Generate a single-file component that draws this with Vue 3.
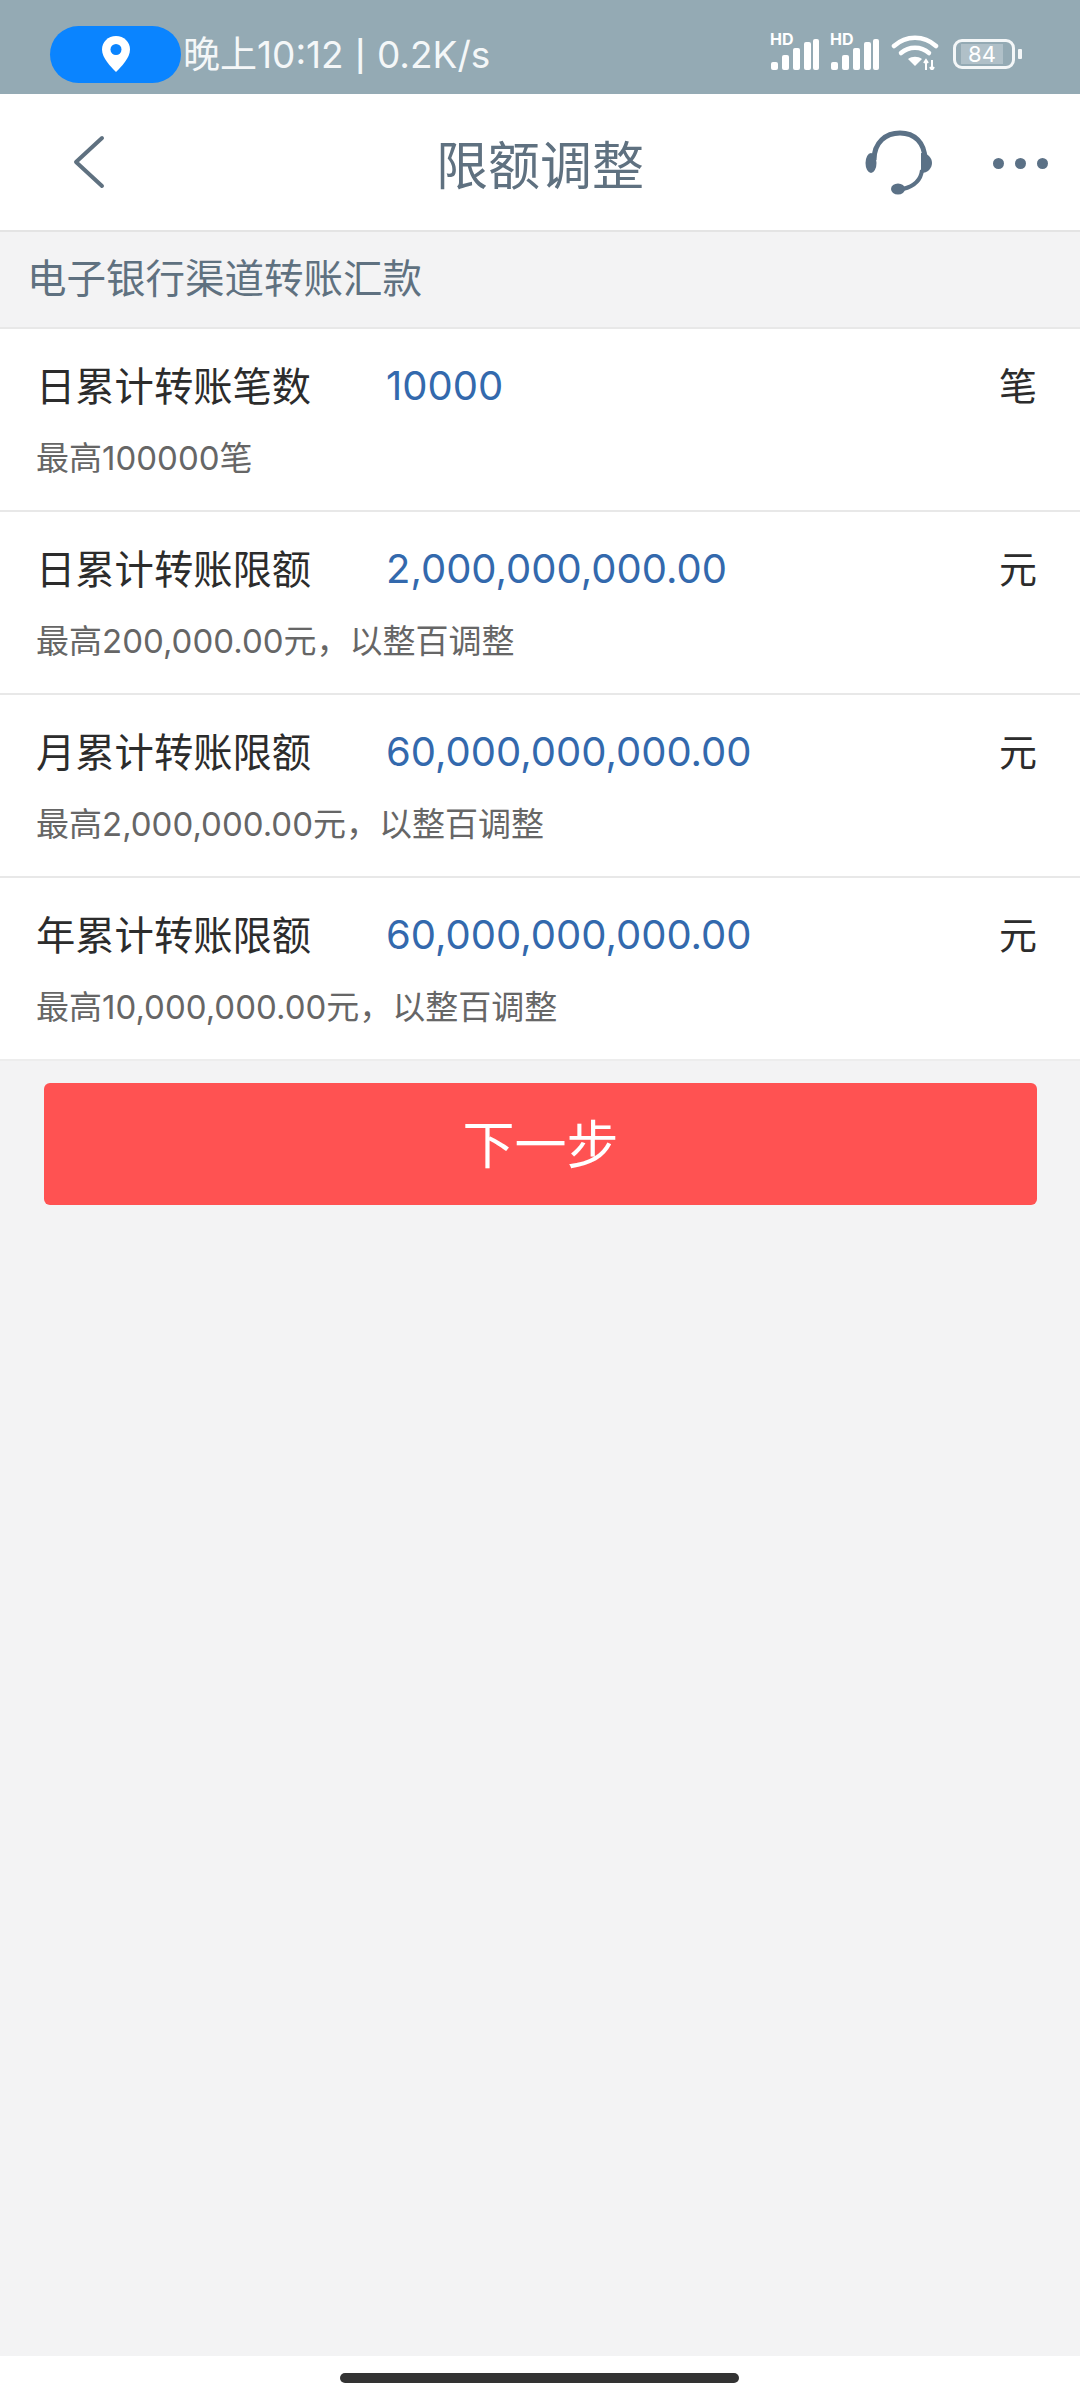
<template>
  <div class="page">
    <div class="status-bar">
      <div class="loc-pill">
        <svg width="30" height="38" viewBox="0 0 30 38">
          <path d="M15 1C7 1 1 7 1 14.500C1 23 10 32 15 37C20 32 29 23 29 14.500C29 7 23 1 15 1Z" fill="#fff" />
          <circle cx="15" cy="14.500" r="5.500" fill="#0a84ff" />
        </svg>
      </div>
      <span class="status-text">晚上10:12 <span class="sep">|</span> 0.2K/s</span>
      <div class="status-icons">
        <div v-for="n in 2" :key="n" class="signal">
          <span class="hd">HD</span>
          <svg width="50" height="32" viewBox="0 0 50 32">
            <rect x="1" y="24" width="7" height="8" rx="2" fill="#fff" />
            <rect x="12" y="17" width="7" height="15" rx="2" fill="#fff" />
            <rect x="23" y="10" width="7" height="22" rx="2" fill="#fff" />
            <rect x="34" y="4" width="7" height="28" rx="2" fill="#fff" />
            <rect x="43" y="1" width="6" height="31" rx="2" fill="#fff" />
          </svg>
        </div>
        <svg class="wifi" width="48" height="36" viewBox="0 0 48 36">
          <path d="M3 12C15 1 33 1 45 12" fill="none" stroke="#fff" stroke-width="4.500" stroke-linecap="round" />
          <path d="M10 19C18 12 30 12 38 19" fill="none" stroke="#fff" stroke-width="4.500" stroke-linecap="round" />
          <path d="M17 25C21 22 27 22 31 25L24 32Z" fill="#fff" />
          <path d="M35 36V27M33 29L35 26L37 29M41 26V35M39 33L41 36L43 33" fill="none" stroke="#fff" stroke-width="2" />
        </svg>
        <div class="battery">
          <div class="battery-body"><span class="battery-num">84</span></div>
          <div class="battery-cap"></div>
        </div>
      </div>
    </div>

    <div class="nav">
      <svg class="back" width="34" height="54" viewBox="0 0 34 54">
        <path d="M30 3L4 27L30 51" fill="none" stroke="#5f7180" stroke-width="4" stroke-linecap="round" stroke-linejoin="round" />
      </svg>
      <h1 class="title">限额调整</h1>
      <svg class="service" width="68" height="66" viewBox="0 0 68 66">
        <path d="M9 30C9 12 21 3 35 3C49 3 60 12 60 30" fill="none" stroke="#5b7186" stroke-width="5" />
        <path d="M57 40C56 50 50 56 38 59" fill="none" stroke="#5b7186" stroke-width="4" />
        <ellipse cx="6" cy="33" rx="5.500" ry="10" fill="#5b7186" />
        <path d="M56 23C63 23 67 28 67 33C67 38 63 43 56 43Z" fill="#5b7186" />
        <ellipse cx="33" cy="59" rx="7" ry="5.500" fill="#5b7186" />
      </svg>
      <div class="more">
        <span class="dot"></span><span class="dot"></span><span class="dot"></span>
      </div>
    </div>

    <div class="section-title">电子银行渠道转账汇款</div>

    <div class="list">
      <div v-for="item in items" :key="item.label" class="row">
        <div class="row-main">
          <span class="label">{{ item.label }}</span>
          <span class="value">{{ item.value }}</span>
          <span class="unit">{{ item.unit }}</span>
        </div>
        <div class="hint">{{ item.hint }}</div>
      </div>
    </div>

    <div class="btn-wrap">
      <button class="next-btn">下一步</button>
    </div>

    <div class="spacer"></div>

    <div class="home-area">
      <div class="home-bar"></div>
    </div>
  </div>
</template>

<script setup>
const items = [
  { label: '日累计转账笔数', value: '10000', unit: '笔', hint: '最高100000笔' },
  { label: '日累计转账限额', value: '2,000,000,000.00', unit: '元', hint: '最高200,000.00元，以整百调整' },
  { label: '月累计转账限额', value: '60,000,000,000.00', unit: '元', hint: '最高2,000,000.00元，以整百调整' },
  { label: '年累计转账限额', value: '60,000,000,000.00', unit: '元', hint: '最高10,000,000.00元，以整百调整' },
]
</script>

<style>
html, body { margin: 0; background: #f3f3f4; }
</style>

<style scoped>
.page {
  width: 1080px;
  height: 2400px;
  display: flex;
  flex-direction: column;
  background: #f3f3f4;
  font-family: Inter, "Noto Sans CJK SC", sans-serif;
}

.status-bar {
  height: 94px;
  flex: none;
  background: #94aab4;
  display: flex;
  align-items: center;
  padding-left: 50px;
  padding-right: 58px;
  box-sizing: border-box;
  color: #f4f7f8;
}
.loc-pill {
  width: 131px;
  height: 57px;
  margin-top: 14px;
  border-radius: 29px;
  background: #0a84ff;
  display: flex;
  align-items: center;
  justify-content: center;
}
.status-text { margin-left: 2px; margin-top: 14px; font-size: 37px; line-height: 80px; white-space: nowrap; }
.sep { font-family: Roboto, sans-serif; font-weight: 500; font-size: 42px; margin: 0 1px; }
.status-icons { margin-left: auto; display: flex; align-items: flex-end; gap: 10px; height: 40px; margin-top: 6px; }
.signal { position: relative; width: 50px; height: 32px; }
.signal svg { display: block; }
.hd {
  position: absolute;
  left: 0;
  top: -8px;
  font-size: 16px;
  line-height: 18px;
  font-weight: 700;
  color: #fff;
}
.wifi { margin-left: 1px; margin-right: 4px; }
.battery { display: flex; align-items: center; gap: 3px; height: 32px; }
.battery-body {
  width: 62px;
  height: 30px;
  box-sizing: border-box;
  border: 3px solid #f4f7f8;
  border-radius: 9px;
  display: flex;
  align-items: center;
  padding-left: 5px;
}
.battery-num {
  width: 42px;
  height: 20px;
  background: #b0c0c8;
  font-size: 22px;
  line-height: 20px;
  text-align: center;
  color: #fff;
}
.battery-cap { width: 4px; height: 10px; background: #f4f7f8; border-radius: 1px; }

.nav {
  height: 138px;
  flex: none;
  box-sizing: border-box;
  background: #fff;
  border-bottom: 2px solid #e4e4e4;
  display: flex;
  align-items: center;
  position: relative;
  padding-left: 72px;
  padding-right: 32px;
}
.back { display: block; margin-top: 0; }
.title {
  position: absolute;
  left: 0;
  right: 0;
  margin: 0;
  text-align: center;
  font-size: 52px;
  font-weight: 400;
  color: #5f7180;
  pointer-events: none;
}
.service { margin-left: auto; margin-top: 2px; }
.more { display: flex; gap: 11px; margin-left: 60px; margin-top: 2px; }
.dot { width: 11px; height: 11px; border-radius: 50%; background: #5b7186; }

.section-title {
  height: 97px;
  flex: none;
  box-sizing: border-box;
  padding-left: 27px;
  padding-bottom: 8px;
  display: flex;
  align-items: center;
  font-size: 39.500px;
  color: #5f7180;
  border-bottom: 2px solid #e8e8e8;
}

.list { flex: none; background: #fff; }
.row {
  height: 183px;
  box-sizing: border-box;
  padding: 25px 43px 0 36px;
  border-bottom: 2px solid #e8e8e8;
}
.row:last-child { border-bottom-color: #ededed; }
.row-main { display: flex; align-items: center; height: 60px; }
.label { width: 350px; flex: none; font-size: 39.300px; color: #2c2c2c; margin-top: -2px; }
.value { font-size: 40px; color: #3369ad; margin-top: 2px; }
.unit { margin-left: auto; font-size: 38px; color: #2c2c2c; margin-top: -2px; }
.hint { margin-top: 19px; font-size: 33px; line-height: 50px; color: #666; }

.btn-wrap { flex: none; padding: 22px 43px 0 44px; }
.next-btn {
  display: block;
  width: 100%;
  height: 122px;
  border: none;
  border-radius: 6px;
  background: #ff5252;
  color: #fff;
  font-family: inherit;
  font-size: 52px;
  padding-bottom: 6px;
}

.spacer { flex: 1; }

.home-area {
  height: 44px;
  flex: none;
  background: #fff;
  position: relative;
}
.home-bar {
  position: absolute;
  left: 340px;
  top: 17px;
  width: 399px;
  height: 10px;
  border-radius: 5px;
  background: #333;
}
</style>
